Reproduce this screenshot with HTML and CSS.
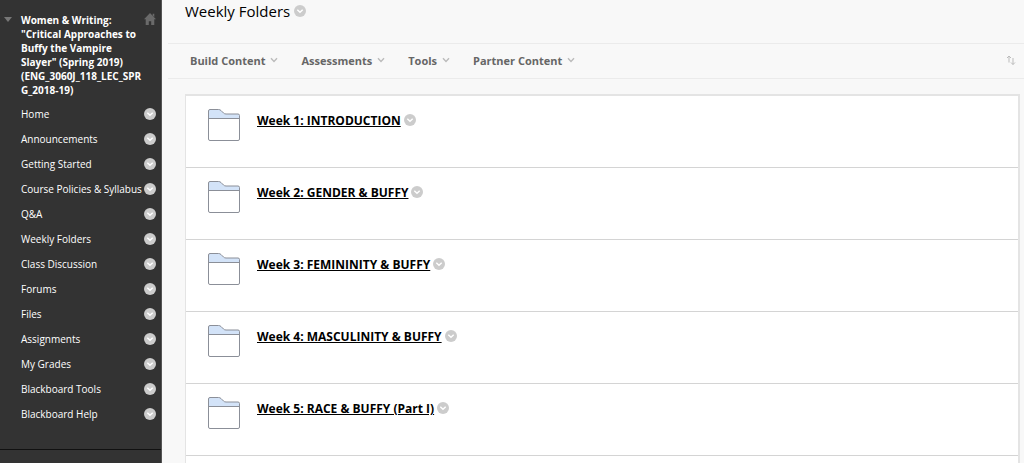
FILE: index.html
```html
<!DOCTYPE html>
<html lang="en">
<head>
  <meta charset="UTF-8" />
  <meta name="viewport" content="width=device-width, initial-scale=1.0"/>
  <title>Weekly Folders</title>
  <link rel="stylesheet" href="styles.css">
</head>
<body>

<svg class="sprite" aria-hidden="true">
  <symbol id="circle" viewBox="0 0 12 12">
    <circle cx="6" cy="6" r="6" fill="currentColor"/>
    <path d="M3.300 4.800 6 7.300 8.700 4.800" fill="none" stroke="#fff" stroke-width="1.500"/>
  </symbol>
  <symbol id="chevron" viewBox="0 0 8 6">
    <path d="M1 1.200 4 4.400 7 1.200" fill="none" stroke="currentColor" stroke-width="1.400"/>
  </symbol>
  <symbol id="folder" viewBox="0 0 32 32">
    <path d="M.5 9.500V2Q.5 .5 2 .5H10.500Q12 .5 13 1.500L15.500 4Q16.500 5 18 5H30Q31.500 5 31.500 6.500V9.500Z" fill="#d3e3f8"/>
    <path d="M.5 9.500H31.500V30Q31.500 31.500 30 31.500H2Q.5 31.500 .5 30Z" fill="#fff"/>
    <path d="M.5 9.500H31.500M2 .5H10.500Q12 .5 13 1.500L15.500 4Q16.500 5 18 5H30Q31.500 5 31.500 6.500V30Q31.500 31.500 30 31.500H2Q.5 31.500 .5 30V2Q.5 .5 2 .5Z" fill="none" stroke="#8b8f98"/>
  </symbol>
</svg>

<div class="layout">
  <aside class="sidebar">
    <div class="course">
      <button class="toggle" aria-label="Collapse menu"><svg viewBox="0 0 8 5"><path d="M0 0H8L4 5Z" fill="currentColor"/></svg></button>
      <h2><a href="#">Women &amp; Writing: "Critical Approaches to Buffy the Vampire Slayer" (Spring 2019) (ENG_3060J_118_LEC_SPRG_2018-19)</a></h2>
      <a class="home" href="#" aria-label="Course home"><svg viewBox="0 0 12 12"><path d="M6 0 12 6.200H10.300V12H7.200V8.200H4.800V12H1.700V6.200H0ZM8.700 .8H10.300V4L8.700 2.400Z" fill="currentColor"/></svg></a>
    </div>
    <ul class="menu" id="courseMenu"></ul>
  </aside>

  <main class="content">
    <header class="page-title">
      <h1>Weekly Folders</h1>
      <button class="options" aria-label="Page options"><svg><use href="#circle"/></svg></button>
    </header>
    <nav class="action-bar">
      <button>Build Content <svg><use href="#chevron"/></svg></button>
      <button>Assessments <svg><use href="#chevron"/></svg></button>
      <button>Tools <svg><use href="#chevron"/></svg></button>
      <button>Partner Content <svg><use href="#chevron"/></svg></button>
      <button class="reorder" aria-label="Reorder"><svg viewBox="0 0 10 10"><path d="M3 7.500V1M1 3 3 1 5 3M7 3V9.500M5 7.500 7 9.500 9 7.500" fill="none" stroke="currentColor"/></svg></button>
    </nav>
    <ul class="folders" id="folderList"></ul>
  </main>
</div>

<script>
const menuItems = [
  'Home', 'Announcements', 'Getting Started', 'Course Policies & Syllabus', 'Q&A',
  'Weekly Folders', 'Class Discussion', 'Forums', 'Files', 'Assignments',
  'My Grades', 'Blackboard Tools', 'Blackboard Help'
];

const folders = [
  'Week 1: INTRODUCTION',
  'Week 2: GENDER & BUFFY',
  'Week 3: FEMININITY & BUFFY',
  'Week 4: MASCULINITY & BUFFY',
  'Week 5: RACE & BUFFY (Part I)'
];

function optionsButton(name) {
  return `<button class="options" aria-label="Options for ${name}"><svg><use href="#circle"/></svg></button>`;
}

function render() {
  const esc = s => s.replace(/&/g, '&amp;');
  document.getElementById('courseMenu').innerHTML = menuItems.map(esc).map(m =>
    `<li><a href="#">${m}</a>${optionsButton(m)}</li>`).join('');
  document.getElementById('folderList').innerHTML = folders.map(esc).map(f =>
    `<li><svg class="folder-icon"><use href="#folder"/></svg><h3><a href="#">${f}</a></h3>${optionsButton(f)}</li>`).join('');
}

render();
</script>
</body>
</html>
```
FILE: styles.css
```css
* {
  box-sizing: border-box;
}
body {
  margin: 0;
  font-family: "Open Sans", sans-serif;
  font-size: 12px;
  color: #000;
  background: #f8f8f8;
}
h1, h2, h3, ul {
  margin: 0;
  padding: 0;
}
ul {
  list-style: none;
}
a {
  color: inherit;
  text-decoration: none;
}
button {
  display: flex;
  align-items: center;
  padding: 0;
  border: none;
  background: none;
  font: inherit;
  color: inherit;
  cursor: pointer;
}
svg {
  display: block;
}
.sprite {
  display: none;
}
.layout {
  display: flex;
  min-height: 100vh;
}

/* course menu */
.sidebar {
  flex: none;
  width: 162px;
  background: #333;
  color: #fff;
  border-right: 1px solid #555;
}
.course {
  display: flex;
  align-items: flex-start;
  padding: 13px 5px 0 4px;
}
.course h2 {
  flex: 1;
  min-width: 0;
  margin-left: 9px;
  font-size: 10px;
  line-height: 14px;
  overflow-wrap: anywhere;
}
.toggle {
  margin-top: 4px;
  color: #777;
}
.toggle svg {
  width: 8px;
  height: 5px;
}
.home {
  color: #6a6a6a;
}
.home svg {
  width: 12px;
  height: 12px;
}
.menu {
  padding: 4px 5px 23px 21px;
  border-bottom: 1px solid #111;
  font-size: 10px;
  font-weight: 500;
}
.menu li {
  display: flex;
  align-items: center;
  justify-content: space-between;
  height: 25px;
  white-space: nowrap;
}
.options {
  color: #ccc;
}
.options svg {
  width: 12px;
  height: 12px;
}

/* main column */
.content {
  flex: 1;
  min-width: 0;
  display: flex;
  flex-direction: column;
  padding-left: 6px;
}
.page-title {
  display: flex;
  align-items: flex-start;
  gap: 4px;
  height: 44px;
  padding-left: 17px;
  border-bottom: 1px solid #ebebeb;
}
.page-title h1 {
  font-size: 15px;
  font-weight: 400;
  line-height: 22px;
}
.page-title .options {
  height: 22px;
}
.action-bar {
  display: flex;
  align-items: center;
  gap: 23px;
  height: 35px;
  padding: 0 8px 2px 22px;
  border-bottom: 1px solid #ebebeb;
  font-size: 11px;
  font-weight: 700;
  color: #666;
}
.action-bar button {
  gap: 5px;
}
.action-bar svg {
  width: 8px;
  height: 6px;
  color: #bbb;
}
.action-bar .reorder {
  margin-left: auto;
}
.action-bar .reorder svg {
  width: 10px;
  height: 10px;
}
.folders {
  flex: 1;
  margin: 15px 4px 0 17px;
  background: #fff;
  border: solid #e4e4e4;
  border-width: 2px 2px 0 1px;
}
.folders li {
  display: flex;
  align-items: flex-start;
  height: 72px;
  padding: 13px 22px;
  border-bottom: 1px solid #d4d4d4;
}
.folder-icon {
  flex: none;
  width: 32px;
  height: 32px;
  margin-right: 17px;
}
.folders h3 {
  font-size: 12px;
  line-height: 24px;
}
.folders h3 a {
  text-decoration: underline;
}
.folders .options {
  height: 22px;
  margin-left: 3px;
}
```
